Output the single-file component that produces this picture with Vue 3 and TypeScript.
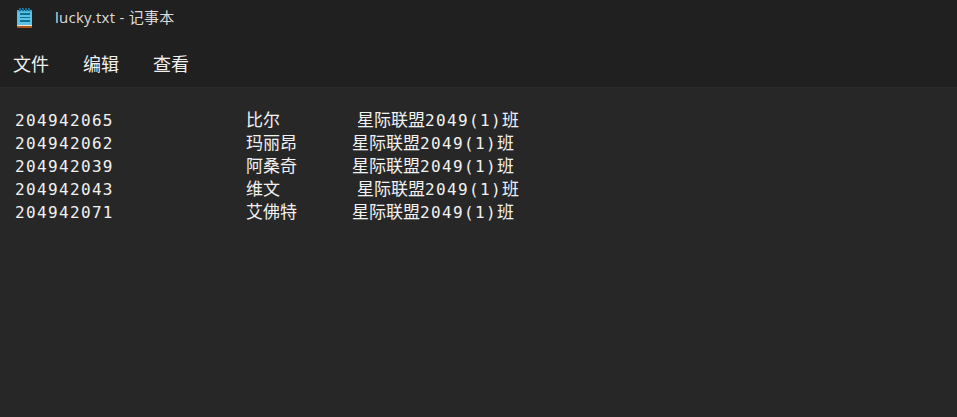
<template>
  <div id="container">
    <div class="titlebar">
      <svg class="app-icon" width="16" height="21" viewBox="0 0 16 21">
        <rect x="0" y="2" width="15" height="16" fill="#5cc3e6" />
        <rect x="0" y="2" width="15" height="2" fill="#47aed3" />
        <rect x="0" y="17" width="15" height="1" fill="#efe3cc" />
        <rect x="0" y="18" width="15" height="2" fill="#a8581c" />
        <rect x="2" y="0" width="2" height="3" fill="#0f6f93" />
        <rect x="5" y="0" width="2" height="3" fill="#0f6f93" />
        <rect x="8" y="0" width="2" height="3" fill="#0f6f93" />
        <rect x="11" y="0" width="2" height="3" fill="#0f6f93" />
        <rect x="3" y="5" width="10" height="2" fill="#0f6f93" />
        <rect x="3" y="9" width="10" height="1" fill="#0f6f93" />
        <rect x="3" y="12" width="10" height="2" fill="#0f6f93" />
      </svg>
      <span class="title">lucky.txt - 记事本</span>
    </div>
    <div class="menubar">
      <span v-for="m in menus" :key="m" class="menu-item">{{ m }}</span>
    </div>
    <div class="editor">
      <div v-for="r in rows" :key="r.id" class="row">
        <span class="id">{{ r.id }}</span>
        <span class="name">{{ r.name }}</span>
        <span class="team" :class="{ short: r.name.length == 2 }">星际联盟<span class="num">2049(1)</span>班</span>
      </div>
    </div>
  </div>
</template>

<script setup lang="ts">
interface row {
  id: string,
  name: string
}

const menus: string[] = ['文件', '编辑', '查看']

const rows: row[] = [
  {id: '204942065', name: '比尔'},
  {id: '204942062', name: '玛丽昂'},
  {id: '204942039', name: '阿桑奇'},
  {id: '204942043', name: '维文'},
  {id: '204942071', name: '艾佛特'}
]
</script>

<style>
html, body {
  margin: 0;
  background: #272727;
}
</style>

<style scoped>
#container {
  width: 957px;
  height: 417px;
  overflow: hidden;
  background: #272727;
  color: #f2f2f2;
  font-family: "Open Sans", "Noto Sans CJK SC", sans-serif;
}

.titlebar {
  height: 36px;
  display: flex;
  align-items: center;
  padding-left: 17px;
  background: #202020;
}

.app-icon {
  flex: none;
}

.title {
  margin-left: 22px;
  margin-bottom: 3px;
  font-size: 15px;
  letter-spacing: 0.25px;
  color: #dcdcdc;
}

.menubar {
  height: 52px;
  box-sizing: border-box;
  display: flex;
  gap: 34px;
  padding: 7px 0 0 13px;
  background: #202020;
  border-bottom: 1px solid #2b2b2b;
}

.menu-item {
  font-size: 18px;
  line-height: 42px;
  height: 42px;
  color: #f0f0f0;
}

.editor {
  padding-top: 21px;
  padding-left: 15px;
  font-family: "DejaVu Sans Mono", "Noto Sans CJK SC", monospace;
  font-size: 16px;
}

.row {
  display: flex;
  height: 23px;
  line-height: 23px;
}

.id {
  width: 231px;
  letter-spacing: 1.35px;
}

.name {
  width: 106px;
  font-size: 17px;
}

.team {
  font-size: 17px;
}

.team.short {
  padding-left: 5px;
}

.num {
  font-size: 16px;
  letter-spacing: 1.35px;
}
</style>
